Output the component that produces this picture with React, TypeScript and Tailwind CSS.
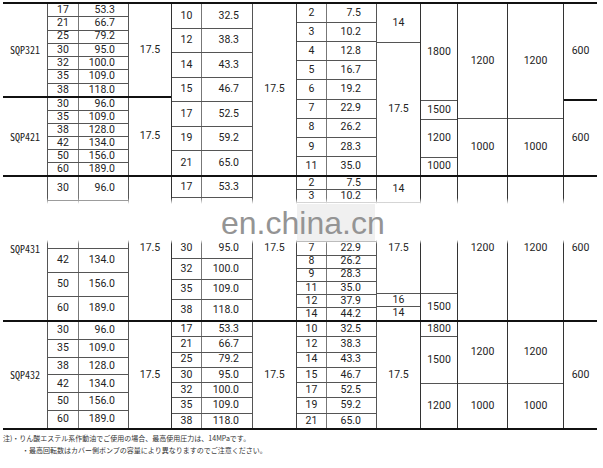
import React from "react";

type Pair = [string, string];

const small: Pair[] = [
  ["17", "53.3"],
  ["21", "66.7"],
  ["25", "79.2"],
  ["30", "95.0"],
  ["32", "100.0"],
  ["35", "109.0"],
  ["38", "118.0"],
];

const large: Pair[] = [
  ["30", "96.0"],
  ["35", "109.0"],
  ["38", "128.0"],
  ["42", "134.0"],
  ["50", "156.0"],
  ["60", "189.0"],
];

const mid: Pair[] = [
  ["10", "32.5"],
  ["12", "38.3"],
  ["14", "43.3"],
  ["15", "46.7"],
  ["17", "52.5"],
  ["19", "59.2"],
  ["21", "65.0"],
];

const tiny: Pair[] = [
  ["2", "7.5"],
  ["3", "10.2"],
  ["4", "12.8"],
  ["5", "16.7"],
  ["6", "19.2"],
  ["7", "22.9"],
  ["8", "26.2"],
  ["9", "28.3"],
  ["11", "35.0"],
];

// rows of SQP431 that sit under the watermark are left blank, as in the picture
const largeB: Pair[] = [["30", "96.0"], ["", ""], ["", ""], ...large.slice(3)];
const smallB: Pair[] = [["17", "53.3"], ["", ""], ["", ""], ...small.slice(3)];
const tinyB: Pair[] = [
  ["2", "7.5"],
  ["3", "10.2"],
  ["", ""],
  ["", ""],
  ["", ""],
  ...tiny.slice(5),
  ["12", "37.9"],
  ["14", "44.2"],
];

function Cell({ children, className = "" }: { children?: React.ReactNode; className?: string }) {
  return <div className={`flex items-center justify-center ${className}`}>{children}</div>;
}

function Pairs({
  rows,
  className,
  leftW,
  pr,
}: {
  rows: Pair[];
  className: string;
  leftW: string;
  pr: string;
}) {
  return (
    <div className={`flex flex-col ${className}`}>
      {rows.map(([a, b], i) => (
        <div key={i} className={`flex flex-1 ${i ? "border-t border-[#555]" : ""}`}>
          <div className={`flex items-center justify-center ${leftW}`}>{a}</div>
          <div className={`flex flex-1 items-center justify-end border-l border-[#777] ${pr}`}>{b}</div>
        </div>
      ))}
    </div>
  );
}

function Model({ name, rows }: { name: string; rows: Pair[] }) {
  return (
    <>
      <Cell className="w-[44px] font-['Noto_Sans_Mono_CJK_JP','DejaVu_Sans_Mono',monospace] text-[10px]">{name}</Cell>
      <Pairs rows={rows} className="w-[81px] border-l border-[#555]" leftW="w-[30px]" pr="pr-[13px]" />
      <Cell className="w-[43px] border-l border-[#555]">17.5</Cell>
    </>
  );
}

export default function App() {
  return (
    <div className="relative h-[468px] w-[603px] overflow-hidden bg-white font-['Roboto',sans-serif] text-[10.5px] leading-none text-[#222]">
      <div className="ml-[3px] mt-[2px] flex w-[594px] flex-col">
        {/* SQP321 / SQP421 */}
        <div className="flex h-[173px] border-t-2 border-[#111]">
          <div className="flex w-[168px] flex-col">
            <div className="flex h-[92px]">
              <Model name="SQP321" rows={small} />
            </div>
            <div className="flex flex-1 border-t-2 border-[#111]">
              <Model name="SQP421" rows={large} />
            </div>
          </div>
          <Pairs rows={mid} className="w-[81px] border-l border-[#333]" leftW="w-[29px]" pr="pr-[13px]" />
          <Cell className="w-[44px] border-l border-[#555]">17.5</Cell>
          <Pairs rows={tiny} className="w-[80px] border-l border-[#444]" leftW="w-[29px]" pr="pr-[15px]" />
          <div className="flex w-[44px] flex-col border-l border-[#555]">
            <Cell className="flex-[2]">14</Cell>
            <Cell className="flex-[7] border-t border-[#555]">17.5</Cell>
          </div>
          <div className="flex w-[37px] flex-col border-l border-[#333]">
            <Cell className="h-[96px]">1800</Cell>
            <Cell className="h-[19px] border-t border-[#555]">1500</Cell>
            <Cell className="h-[38px] border-t border-[#555]">1200</Cell>
            <Cell className="flex-1 border-t border-[#555]">1000</Cell>
          </div>
          <div className="flex w-[50px] flex-col border-l border-[#333]">
            <Cell className="h-[114px]">1200</Cell>
            <Cell className="flex-1 border-t border-[#555]">1000</Cell>
          </div>
          <div className="flex w-[56px] flex-col border-l border-[#333]">
            <Cell className="h-[114px]">1200</Cell>
            <Cell className="flex-1 border-t border-[#555]">1000</Cell>
          </div>
          <div className="flex flex-1 flex-col border-l border-[#333]">
            <Cell className="h-[95px]">600</Cell>
            <Cell className="flex-1 border-t-2 border-[#111]">600</Cell>
          </div>
        </div>

        {/* SQP431 */}
        <div className="flex h-[145px] border-t-2 border-[#111]">
          <Model name="SQP431" rows={largeB} />
          <Pairs rows={smallB} className="w-[81px] border-l border-[#333]" leftW="w-[29px]" pr="pr-[13px]" />
          <Cell className="w-[44px] border-l border-[#555]">17.5</Cell>
          <Pairs rows={tinyB} className="w-[80px] border-l border-[#444]" leftW="w-[29px]" pr="pr-[15px]" />
          <div className="flex w-[44px] flex-col border-l border-[#555]">
            <Cell className="flex-[2]">14</Cell>
            <Cell className="flex-[7] border-t border-[#555]">17.5</Cell>
            <Cell className="flex-1 border-t border-[#555]">16</Cell>
            <Cell className="flex-1 border-t border-[#555]">14</Cell>
          </div>
          <div className="flex w-[37px] flex-col border-l border-[#333]">
            <Cell className="flex-[9]" />
            <Cell className="flex-[2] border-t border-[#555]">1500</Cell>
          </div>
          <Cell className="w-[50px] border-l border-[#333]">1200</Cell>
          <Cell className="w-[56px] border-l border-[#333]">1200</Cell>
          <Cell className="flex-1 border-l border-[#333]">600</Cell>
        </div>

        {/* SQP432 */}
        <div className="flex h-[110px] border-y-2 border-[#111]">
          <Model name="SQP432" rows={large} />
          <Pairs rows={small} className="w-[81px] border-l border-[#333]" leftW="w-[29px]" pr="pr-[13px]" />
          <Cell className="w-[44px] border-l border-[#555]">17.5</Cell>
          <Pairs rows={mid} className="w-[80px] border-l border-[#444]" leftW="w-[29px]" pr="pr-[15px]" />
          <Cell className="w-[44px] border-l border-[#555]">17.5</Cell>
          <div className="flex w-[37px] flex-col border-l border-[#333]">
            <Cell className="h-[14px]">1800</Cell>
            <Cell className="h-[47px] border-t border-[#555]">1500</Cell>
            <Cell className="flex-1 border-t border-[#555]">1200</Cell>
          </div>
          <div className="flex w-[50px] flex-col border-l border-[#333]">
            <Cell className="h-[61px]">1200</Cell>
            <Cell className="flex-1 border-t border-[#555]">1000</Cell>
          </div>
          <div className="flex w-[56px] flex-col border-l border-[#333]">
            <Cell className="h-[61px]">1200</Cell>
            <Cell className="flex-1 border-t border-[#555]">1000</Cell>
          </div>
          <Cell className="flex-1 border-l border-[#333]">600</Cell>
        </div>
      </div>

      <div className="ml-[3px] mt-[2px] font-['Noto_Sans_CJK_JP',sans-serif] text-[7px] leading-[12px] text-[#333]">
        <div>注)・りん酸エステル系作動油でご使用の場合、最高使用圧力は、14MPaです。</div>
        <div className="pl-[19px]">・最高回転数はカバー側ポンプの容量により異なりますのでご注意ください。</div>
      </div>

      {/* watermark */}
      <div className="pointer-events-none absolute left-0 top-[198px] h-[46px] w-full bg-[linear-gradient(to_bottom,rgba(255,255,255,0),#fff_13%,#fff_91%,rgba(255,255,255,0))]" />
      <div className="pointer-events-none absolute left-[297px] top-[204px] h-[37px] w-[78px] bg-[#f0f0f0]" />
      <div className="pointer-events-none absolute left-[221px] top-[207px] font-['Liberation_Sans',sans-serif] text-[32px] leading-none text-[#949494]">
        en.china.cn
      </div>
    </div>
  );
}
